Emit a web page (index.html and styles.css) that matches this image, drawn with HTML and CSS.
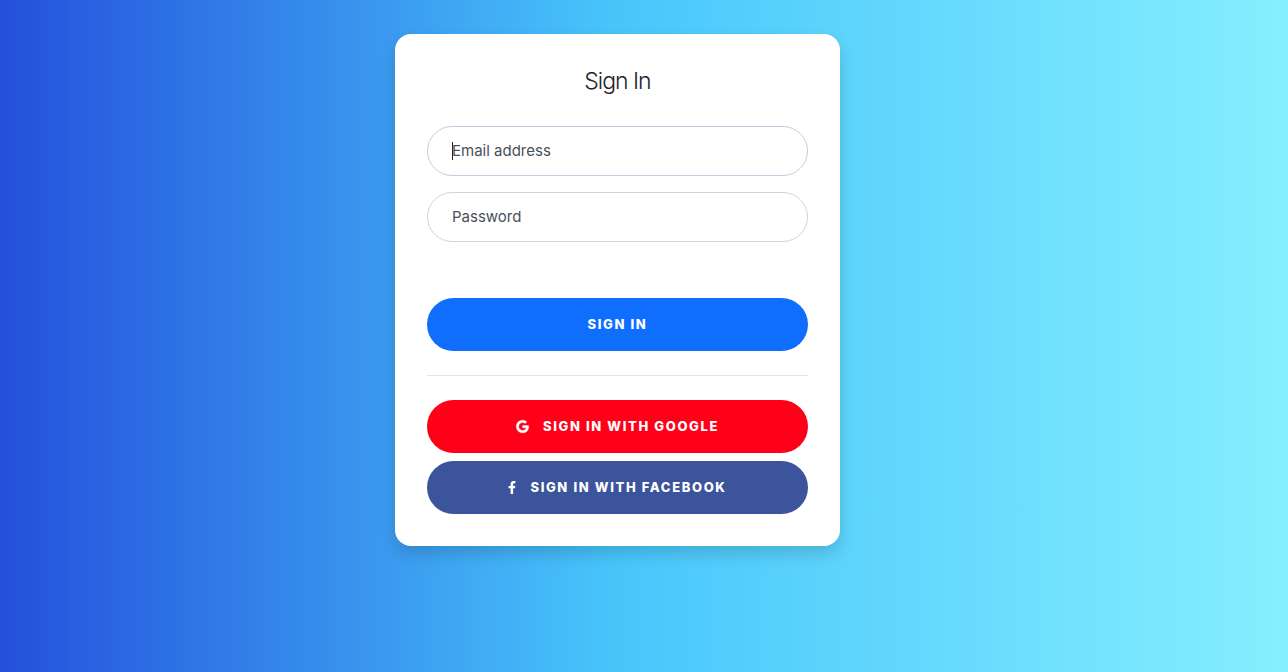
FILE: index.html
```html
<!DOCTYPE html>
<html lang="en">
<head>
<meta charset="utf-8">
<meta name="viewport" content="width=device-width, initial-scale=1">
<title>Sign In</title>
<link rel="stylesheet" href="styles.css">
</head>
<body class="page">
<main class="card">
  <h1 class="title">Sign In</h1>
  <form class="form">
    <div class="field field-active">
      <input class="input" type="email" id="email" autocomplete="off">
      <label class="label" for="email"><span class="caret"></span>Email address</label>
    </div>
    <div class="field">
      <input class="input" type="password" id="password" autocomplete="off">
      <label class="label" for="password">Password</label>
    </div>
    <button class="btn btn-primary" type="submit">Sign in</button>
    <hr class="divider">
    <div class="social">
      <button class="btn btn-google" type="button">
        <svg class="icon icon-google" viewBox="0 0 488 512" aria-hidden="true"><path fill="currentColor" stroke="currentColor" stroke-width="16" d="M488 261.800C488 403.300 391.100 504 248 504 110.800 504 0 393.200 0 256S110.800 8 248 8c66.800 0 123 24.500 166.300 64.900l-67.500 64.900C258.500 52.600 94.300 116.600 94.300 256c0 86.500 69.100 156.600 153.700 156.600 98.200 0 135-70.400 140.800-106.900H248v-85.300h236.100c2.300 12.700 3.900 24.900 3.900 41.400z"/></svg>
        <span>Sign in with Google</span>
      </button>
      <button class="btn btn-facebook" type="button">
        <svg class="icon icon-facebook" viewBox="0 0 320 512" aria-hidden="true"><path fill="currentColor" d="M279.140 288l14.220-92.660h-88.910v-60.130c0-25.350 12.420-50.060 52.240-50.060h40.420V6.260S260.430 0 225.360 0c-73.220 0-121.080 44.380-121.080 124.720v70.620H22.890V288h81.390v224h100.170V288z"/></svg>
        <span>Sign in with Facebook</span>
      </button>
    </div>
  </form>
</main>
</body>
</html>
```
FILE: styles.css
```css
* {
  box-sizing: border-box;
}

.page {
  min-height: 100vh;
  margin: 0;
  padding: 34px 53px 34px 0;
  background: linear-gradient(to right, #2450dc 0%, #48c6fb 48%, #86efff 100%);
  color: #212529;
  font-family: Inter, "Liberation Sans", sans-serif;
  font-size: 15px;
  line-height: 24px;
}

.card {
  width: 100%;
  max-width: 445px;
  margin: 0 auto;
  padding: 32px;
  border-radius: 16px;
  background: #fff;
  box-shadow: 0 8px 16px rgba(0, 0, 0, 0.15);
}

.title {
  margin: 0 0 30px;
  font-size: 23px;
  font-weight: 300;
  line-height: 30px;
  letter-spacing: -1px;
  text-align: center;
}

.field {
  display: grid;
  align-items: center;
  margin-bottom: 16px;
}

.input,
.label {
  grid-area: 1 / 1;
}

.input {
  width: 100%;
  height: 50px;
  padding: 0 24px;
  border: 1px solid #ced4da;
  border-radius: 25px;
  background: #fff;
  color: #495057;
  font: inherit;
  outline: none;
}

.field-active .input {
  border-color: #c0cfdf;
}

.label {
  position: relative;
  justify-self: start;
  margin-left: 25px;
  color: #495057;
  cursor: text;
}

.caret {
  position: absolute;
  top: 3px;
  left: 0;
  width: 1px;
  height: 18px;
  background: #212529;
}

.btn {
  display: flex;
  align-items: center;
  justify-content: center;
  width: 100%;
  min-height: 53px;
  padding: 15px 16px 16px;
  border: 0;
  border-radius: 27px;
  color: #fff;
  font-family: inherit;
  font-size: 13px;
  font-weight: 800;
  line-height: 20px;
  letter-spacing: 0.125em;
  text-transform: uppercase;
  cursor: pointer;
}

.btn-primary {
  margin-top: 56px;
  background: #106eff;
}

.btn-google {
  background: #ff0018;
}

.btn-facebook {
  background: #3b549c;
}

.divider {
  height: 1px;
  margin: 24px 0;
  border: 0;
  background: #e2e3e4;
}

.social {
  display: grid;
  gap: 8px;
}

.icon {
  flex: none;
  height: 13px;
  margin-right: 14px;
  overflow: visible;
}

.icon-google {
  width: 13px;
}

.icon-facebook {
  width: 8px;
}
```
